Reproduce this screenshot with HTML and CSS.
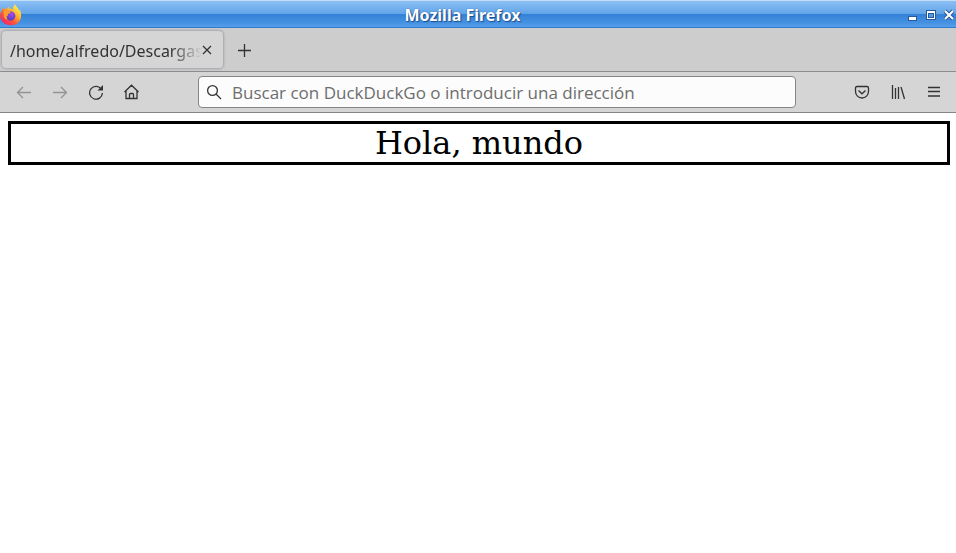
FILE: index.html
```html
<!DOCTYPE html>
<html lang="es">
<head>
<meta charset="utf-8">
<title>Mozilla Firefox</title>
<link rel="stylesheet" href="styles.css">
</head>
<body>
<header class="titlebar">
  <svg class="logo" viewBox="0 0 22 22" aria-hidden="true">
    <defs>
      <linearGradient id="flame" x1="0.85" y1="0.1" x2="0.2" y2="0.95">
        <stop offset="0" stop-color="#fff04a"/>
        <stop offset="0.35" stop-color="#ffb52e"/>
        <stop offset="0.65" stop-color="#ff5a35"/>
        <stop offset="1" stop-color="#f0246e"/>
      </linearGradient>
      <radialGradient id="globe" cx="0.6" cy="0.3" r="0.8">
        <stop offset="0" stop-color="#a04bf0"/>
        <stop offset="1" stop-color="#4b3cb4"/>
      </radialGradient>
    </defs>
    <path fill="url(#flame)" d="M2.8 3.6 4 5.200C5 4.600 6 4.500 7 4.700 7.500 3.700 8.500 3 9.500 2.700L9 4.500C10.500 4.500 12 4.800 13.300 5.800 13.500 4 13 3.500 12.200 2.800 13 2.500 13.500 2.700 14.100 3 13.800 1.900 14 .9 14.700 0 15.500 2.200 18.100 3.600 19.100 6.500L19.500 5.800C20.700 7.500 21.300 9.500 21.100 12.500 20.600 17.800 16.200 21.300 10.700 21.300 4.900 21.300 .2 17.300 .2 11.800 .2 9.500 .9 7.500 2 6.400 2 5.300 2.200 4.300 2.800 3.600Z"/>
    <circle cx="10.700" cy="12" r="4.700" fill="url(#globe)"/>
    <path fill="#ff9a2e" d="M3.500 6.700C6 5.200 8.200 7 10.800 7.900 10.800 9.200 8.300 9.200 7.900 10.400 7.900 11.700 7.500 12.200 6.500 12.600 7 13.400 7 14.500 7.500 15.500 5.500 15.500 4.500 14.500 4 12.800Z"/>
  </svg>
  <span class="window-title">Mozilla Firefox</span>
  <div class="window-buttons">
    <button type="button" aria-label="Minimizar"><svg viewBox="0 0 12 14"><path fill="#28599a" d="M1 8h9v5H1z"/><path fill="#fff" d="M2 9h7v3H2z"/></svg></button>
    <button type="button" aria-label="Maximizar"><svg viewBox="0 0 12 14"><path fill="#28599a" d="M1 2h10v10H1z"/><path fill="#fff" d="M2 3h8v8H2z"/><path fill="#28599a" d="M3 5h6v5H3z"/><path fill="#4e9ae5" d="M4 6h4v3H4z"/></svg></button>
    <button type="button" aria-label="Cerrar"><svg viewBox="0 0 12 14"><path class="cross-edge" d="m2 3 8 8m0-8-8 8"/><path class="cross" d="m2 3 8 8m0-8-8 8"/></svg></button>
  </div>
</header>
<nav class="tabs" aria-label="Pestañas">
  <div class="tab">
    <span class="tab-label">/home/alfredo/Descargas</span>
    <button type="button" class="tab-close" aria-label="Cerrar pestaña"><svg class="line" viewBox="0 0 10 10"><path d="m1 1 8 8m0-8-8 8"/></svg></button>
  </div>
  <button type="button" class="new-tab" aria-label="Nueva pestaña"><svg class="line" viewBox="0 0 12 12"><path d="M6.500 0v13M0 6.500h13"/></svg></button>
</nav>
<div class="toolbar">
  <div class="tools">
    <button type="button" disabled aria-label="Atrás"><svg class="line" viewBox="0 0 16 16"><path d="M15 8.500H1.500M7 3 1.500 8.500 7 14"/></svg></button>
    <button type="button" disabled aria-label="Adelante"><svg class="line" viewBox="0 0 16 16"><path d="M1 8.500h13.500M9 3l5.500 5.500L9 14"/></svg></button>
    <button type="button" aria-label="Recargar"><svg class="line" viewBox="0 0 16 16"><path d="M13.500 5.500A6.400 6.400 0 1 0 14.400 9"/><path fill="#333" stroke="none" d="M15 1v5.500H9.500z"/></svg></button>
    <button type="button" aria-label="Inicio"><svg class="line" viewBox="0 0 16 16"><path d="M.5 8 7.500 1.200 14.500 8M2 7v7.500h11V7M5.500 14V10.500q0-1 1-1h2q1 0 1 1V14"/></svg></button>
  </div>
  <label class="address">
    <svg class="line" viewBox="0 0 16 16" aria-hidden="true"><circle cx="6.500" cy="6.500" r="4.900"/><path d="m10 10 5 5"/></svg>
    <input type="text" aria-label="Dirección" placeholder="Buscar con DuckDuckGo o introducir una dirección">
  </label>
  <div class="tools">
    <button type="button" aria-label="Pocket"><svg class="line" viewBox="0 0 16 16"><path d="M3 2.500h10q1.500 0 1.500 1.500v3.500a6.500 6.500 0 0 1-13 0V4Q1.500 2.500 3 2.500Z"/><path d="M4.500 6.500 8 9.800l3.500-3.300"/></svg></button>
    <button type="button" aria-label="Biblioteca"><svg class="line" viewBox="0 0 16 16"><path d="M2.500 1v14M5.500 4v11M8.500 3v12M11 3l3.500 12"/></svg></button>
    <button type="button" aria-label="Menú"><svg class="line" viewBox="0 0 16 16"><path d="M2 3.500h12M2 7.500h12M2 12h12"/></svg></button>
  </div>
</div>
<main class="page">
  <div class="greeting">Hola, mundo</div>
</main>
</body>
</html>
```
FILE: styles.css
```css
* {
  box-sizing: border-box;
}

body {
  margin: 0;
  background: #fff;
  color: #333;
  font-family: "Noto Sans", sans-serif;
  font-size: 16px;
}

button {
  display: flex;
  align-items: center;
  justify-content: center;
  padding: 0;
  border: 0;
  background: none;
}

svg {
  display: block;
  flex: none;
}

.line {
  width: 16px;
  height: 16px;
  fill: none;
  stroke: #333;
  stroke-width: 1.3;
}

.titlebar {
  display: grid;
  grid-template-columns: 1fr auto 1fr;
  align-items: center;
  height: 28px;
  padding-right: 1px;
  border-top: 1px solid #c3def7;
  border-bottom: 1px solid #2f7bd0;
  background: linear-gradient(#8cbff3, #62a5e9 48%, #3381d7 52%, #4792e2 85%, #579eea);
}

.logo {
  width: 22px;
  height: 22px;
}

.window-title {
  margin-right: 30px;
  color: #fff;
  font-weight: 700;
  line-height: 28px;
  text-shadow: 0 0 1px #1d4e8c, 1px 1px 1px #1d4e8c;
}

.window-buttons {
  display: flex;
  justify-content: flex-end;
  gap: 6px;
}

.window-buttons svg {
  width: 12px;
  height: 14px;
  overflow: visible;
}

.cross,
.cross-edge {
  fill: none;
  stroke: #fff;
  stroke-width: 2;
}

.cross-edge {
  stroke: #28599a;
  stroke-width: 4;
}

.tabs {
  display: flex;
  align-items: center;
  gap: 13px;
  height: 44px;
  padding-left: 2px;
  border-bottom: 1px solid #8c8c8c;
  background: #cdcdcd;
}

.tab {
  display: flex;
  align-items: center;
  width: 221px;
  height: 37px;
  padding: 0 11px 0 8px;
  border-radius: 4px;
  background: #d5d5d5;
  box-shadow: 0 0 3px #77778a;
}

.tab-label {
  flex: 1;
  overflow: hidden;
  line-height: 24px;
  padding-top: 2px;
  white-space: nowrap;
  mask-image: linear-gradient(to left, transparent, #000 32px);
}

.tab-close svg {
  width: 10px;
  height: 10px;
}

.new-tab {
  width: 16px;
  height: 16px;
}

.new-tab svg {
  width: 12px;
  height: 12px;
  overflow: visible;
}

.toolbar {
  display: flex;
  align-items: center;
  justify-content: space-between;
  height: 41px;
  padding: 0 14px 0 16px;
  border-bottom: 1px solid #858585;
  background: #d5d5d5;
}

.tools {
  display: flex;
  gap: 20px;
}

.tools button:disabled {
  opacity: 0.4;
}

.address {
  display: flex;
  align-items: center;
  gap: 10px;
  flex: 1;
  height: 32px;
  margin: 0 58px;
  padding: 0 7px;
  border: 1px solid #858585;
  border-radius: 4px;
  background: #fcfcfc;
}

.address input {
  flex: 1;
  min-width: 0;
  padding: 0;
  border: 0;
  outline: 0;
  background: none;
  color: #333;
  font-family: "Open Sans", "Noto Sans", sans-serif;
  font-size: 17px;
}

.address input::placeholder {
  color: #6d6d6d;
  opacity: 1;
}

.page {
  padding: 8px 6px 8px 8px;
}

.greeting {
  border: 3px solid #000;
  color: #000;
  font-family: "DejaVu Serif", serif;
  font-size: 32px;
  line-height: 38px;
  text-align: center;
}
```
